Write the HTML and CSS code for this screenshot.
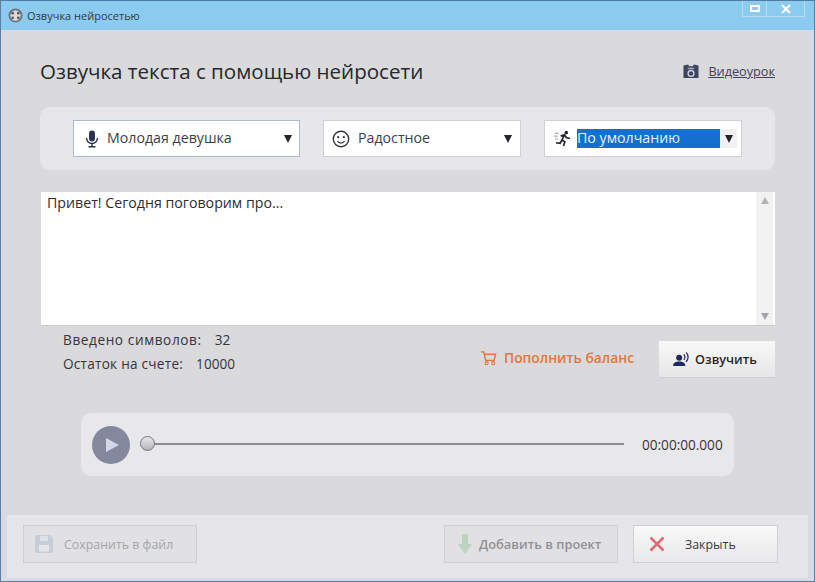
FILE: index.html
```html
<!DOCTYPE html>
<html lang="ru">
<head>
    <meta charset="UTF-8">
    <meta name="viewport" content="width=device-width, initial-scale=1.0">
    <title>Озвучка нейросетью</title>
    <link rel="stylesheet" href="styles.css">
</head>
<body>
    <div class="window">
        <div class="titlebar">
            <div class="title-left">
                <svg class="app-icon" viewBox="0 0 16 16"><circle cx="8" cy="8" r="7.5" fill="#6d7178"/><circle cx="8" cy="8" r="5.5" fill="#d9dadd"/><circle cx="5" cy="5.5" r="1.4" fill="#555"/><circle cx="11" cy="5.5" r="1.4" fill="#555"/><circle cx="5" cy="10.5" r="1.4" fill="#555"/><circle cx="11" cy="10.5" r="1.4" fill="#555"/></svg>
                <span>Озвучка нейросетью</span>
            </div>
            <div class="win-buttons">
                <div class="win-btn"><span class="max-glyph"></span></div>
                <div class="win-btn win-close">
                    <svg viewBox="0 0 10 10" width="10" height="10"><path d="M1 1l8 8M9 1l-8 8" stroke="#fff" stroke-width="2.2"/></svg>
                </div>
            </div>
        </div>

        <div class="main">
            <div class="head-row">
                <h1>Озвучка текста с помощью нейросети</h1>
                <a class="video-link" href="#">
                    <svg viewBox="0 0 16 16" width="16" height="15"><path d="M0 1.500l5-1 1 2h4l1-2 5 1V15H0z" fill="#3c4263"/><circle cx="8" cy="10" r="3.800" fill="#dadadd"/><circle cx="8" cy="10" r="2.400" fill="#3c4263"/><rect x="4.500" y="4" width="7" height="1.500" fill="#a8abba"/></svg>
                    <span>Видеоурок</span>
                </a>
            </div>

            <div class="options-panel">
                <div class="select select-voice">
                    <svg class="sel-icon" viewBox="0 0 16 18" width="16" height="18"><rect x="5" y="0.5" width="6" height="11" rx="3" fill="#2b3154"/><path d="M2.5 8a5.5 5.5 0 0 0 11 0M8 13.5V16M4.5 16.8h7" fill="none" stroke="#2b3154" stroke-width="1.4"/></svg>
                    <span class="sel-text">Молодая девушка</span>
                    <span class="arrow"></span>
                </div>
                <div class="select select-mood">
                    <svg class="sel-icon" viewBox="0 0 18 18" width="18" height="18"><circle cx="9" cy="9" r="7.7" fill="none" stroke="#33363d" stroke-width="1.4"/><circle cx="6.2" cy="7.2" r="1.1" fill="#33363d"/><circle cx="11.8" cy="7.2" r="1.1" fill="#33363d"/><path d="M5.5 11a4 4 0 0 0 7 0" fill="none" stroke="#33363d" stroke-width="1.3"/></svg>
                    <span class="sel-text">Радостное</span>
                    <span class="arrow"></span>
                </div>
                <div class="select select-speed">
                    <svg class="sel-icon" viewBox="0 0 18 18" width="17" height="17"><circle cx="13" cy="2.800" r="1.900" fill="#23262e"/><path d="M7 6.500l4-1.500 2 3 4 1M11 5l-2.500 5.500 3 2-1.500 4.500M8.500 10.500l-2 3.500-4.500-.5" fill="none" stroke="#23262e" stroke-width="1.800"/><path d="M1 3.500h4M0 6.500h4M1 9.500h3" stroke="#8f9198" stroke-width="1"/></svg>
                    <span class="sel-selected">По умолчанию</span>
                    <span class="arrow-box"><span class="arrow"></span></span>
                </div>
            </div>

            <div class="text-box">
                <div class="text-content">Привет! Сегодня поговорим про...</div>
                <div class="scrollbar">
                    <span class="scroll-up"></span>
                    <span class="scroll-down"></span>
                </div>
            </div>

            <div class="action-row">
                <div class="stats">
                    <div class="stat"><span class="stat-label stat-first">Введено символов:</span><span>32</span></div>
                    <div class="stat"><span class="stat-label stat-second">Остаток на счете:</span><span>10000</span></div>
                </div>
                <a class="topup" href="#">
                    <svg viewBox="0 0 18 16" width="17" height="16"><path d="M1 1.500h3l2 9h9l1.500-6.500H4.800" fill="none" stroke="#e2763a" stroke-width="1.500"/><circle cx="7" cy="13.500" r="1.600" fill="none" stroke="#e2763a" stroke-width="1.200"/><circle cx="14" cy="13.500" r="1.600" fill="none" stroke="#e2763a" stroke-width="1.200"/></svg>
                    <span>Пополнить баланс</span>
                </a>
                <button class="btn btn-speak">
                    <svg viewBox="0 0 18 16" width="17" height="15"><circle cx="6.500" cy="6" r="3.200" fill="#1f2a5c"/><path d="M0 15c0-4 3-5 6.500-5s6.500 1 6.500 5z" fill="#1f2a5c"/><path d="M11.500 2.500a5 5 0 0 1 0 6M14 .5a8 8 0 0 1 0 10" fill="none" stroke="#1f2a5c" stroke-width="1.300"/></svg>
                    <span>Озвучить</span>
                </button>
            </div>

            <div class="player">
                <div class="play-btn"><span class="play-tri"></span></div>
                <div class="track"><span class="thumb"></span></div>
                <div class="time">00:00:00.000</div>
            </div>
        </div>

        <div class="footer">
            <button class="foot-btn btn-save" disabled>
                <svg viewBox="0 0 18 18" width="18" height="18"><path d="M0 1.500C0 .700.700 0 1.500 0H15l3 3v13.500c0 .800-.700 1.500-1.500 1.500h-15C.700 18 0 17.300 0 16.500z" fill="#c6ced9"/><rect x="5" y="1" width="8" height="5" fill="#dfe1e6"/><rect x="4" y="10" width="10" height="6.500" fill="#e6e7ea"/></svg>
                <span>Сохранить в файл</span>
            </button>
            <div class="foot-right">
                <button class="foot-btn btn-add" disabled>
                    <svg viewBox="0 0 14 20" width="14" height="20"><path d="M4 0h6v10h4l-7 10-7-10h4z" fill="#bcd3bf"/></svg>
                    <span>Добавить в проект</span>
                </button>
                <button class="foot-btn btn-close">
                    <svg viewBox="0 0 16 16" width="16" height="16"><path d="M1.500 1.500l13 13M14.500 1.500l-13 13" stroke="#de6c72" stroke-width="2.600"/></svg>
                    <span>Закрыть</span>
                </button>
            </div>
        </div>
    </div>
</body>
</html>
```

FILE: styles.css
```css
* { box-sizing: border-box; }
html, body { margin: 0; height: 100%; overflow: hidden; }
body { font-family: "Open Sans", "Noto Sans", sans-serif; font-size: 14px; color: #33353b; background-color: #8fc9ee; }
a { text-decoration: none; }

.window { width: 815px; height: 582px; display: flex; flex-direction: column; background-color: #d6dae6; border: 1px solid #5f7f9c; border-top-color: #4e7d9f; }

/* Titlebar */
.titlebar { height: 29px; flex-shrink: 0; background-color: #8ccbf0; display: flex; justify-content: space-between; align-items: flex-start; padding: 0 9px 0 7px; }
.title-left { display: flex; align-items: center; gap: 4px; height: 29px; font-size: 11px; color: #2f3a44; }
.app-icon { width: 15px; height: 15px; }
.win-buttons { display: flex; border: 1px solid #b6dcf3; border-top: none; height: 16px; }
.win-btn { width: 23px; height: 15px; display: flex; align-items: center; justify-content: center; }
.win-close { width: 38px; border-left: 1px solid #b6dcf3; }
.max-glyph { width: 10px; height: 7px; border: 2px solid #fff; }

/* Main area */
.main { flex: 1; margin: 0 6px; background-color: #dad9db; padding: 26px 33px 0 33px; }
.head-row { display: flex; justify-content: space-between; align-items: center; height: 30px; }
h1 { margin: 0; font-size: 20.55px; font-weight: 400; color: #26282d; }
.video-link { display: flex; align-items: center; gap: 9px; color: #3f4160; font-size: 12.7px; text-decoration: underline; }

.options-panel { margin-top: 21px; height: 63px; background-color: #e7e7e9; border-radius: 10px; display: flex; align-items: center; padding: 0 33px; }
.select { height: 37px; background-color: #fff; border: 1px solid #d0d1d6; display: flex; align-items: center; font-size: 14.2px; color: #3c3f47; }
.select-voice { width: 227px; border: 1px solid #a9bacb; padding-left: 10px; }
.select-mood { width: 198px; margin-left: 23px; padding-left: 8px; }
.select-speed { width: 198px; margin-left: 23px; padding-left: 9px; }
.sel-icon { flex-shrink: 0; }
.sel-text { margin-left: 7px; flex: 1; padding-bottom: 3px; }
.select-mood .sel-text { margin-left: 8px; }
.select-voice .arrow { margin-right: 7px; }
.select-mood .arrow { margin-right: 8px; }
.arrow { width: 0; height: 0; border-left: 4px solid transparent; border-right: 4px solid transparent; border-top: 8px solid #23252b; }
.sel-selected { margin-left: 6px; width: 143px; height: 19px; line-height: 18px; background-color: #1470cf; color: #e8f1fb; }
.arrow-box { width: 17px; height: 19px; background-color: #f1f1f2; display: flex; align-items: center; justify-content: center; }

.text-box { margin-top: 22px; margin-left: 1px; height: 134px; background-color: #fff; display: flex; border-bottom: 1px solid #c9cace; }
.text-content { flex: 1; padding: 1px 6px; font-size: 14.2px; color: #2c2e33; }
.scrollbar { width: 17px; background-color: #f2f2f3; margin-right: 2px; display: flex; flex-direction: column; justify-content: space-between; align-items: center; padding: 5px 0; }
.scroll-up { width: 0; height: 0; border-left: 4px solid transparent; border-right: 4px solid transparent; border-bottom: 7px solid #b3b4b8; }
.scroll-down { width: 0; height: 0; border-left: 4px solid transparent; border-right: 4px solid transparent; border-top: 7px solid #a4a5a9; }

.action-row { display: flex; align-items: flex-start; margin-top: 3px; padding-left: 23px; }
.stats { flex: 1; font-size: 13.6px; color: #33353b; }
.stat { height: 24px; line-height: 22px; display: flex; }
.stat-first { letter-spacing: 0.6px; margin-right: 13px; }
.stat-second { letter-spacing: 0.25px; margin-right: 13px; }
.topup { display: flex; align-items: center; gap: 7px; height: 37px; margin-top: 10px; margin-right: 25px; color: #e2763a; font-size: 13.8px; font-weight: 600; }
.btn { height: 37px; width: 116px; margin-top: 12px; border: none; background: linear-gradient(#f8f8f9, #e6e6e8); font-family: inherit; display: flex; align-items: center; justify-content: center; gap: 5px; padding: 0 4px 0 0; font-size: 12.7px; font-weight: 600; color: #26282d; border-bottom: 1px solid #cfcfd2; }

.player { width: 653px; height: 63px; margin: 35px 0 0 41px; background-color: #e8e7e9; border-radius: 10px; display: flex; align-items: center; padding: 0 11px; }
.play-btn { width: 38px; height: 38px; border-radius: 50%; background-color: #84889d; display: flex; align-items: center; justify-content: center; }
.play-tri { width: 0; height: 0; margin-left: 3px; border-top: 7.500px solid transparent; border-bottom: 7.500px solid transparent; border-left: 13px solid #d2d6e6; }
.track { width: 477px; height: 2px; margin-left: 17px; margin-bottom: 2px; background-color: #8d8d90; position: relative; }
.thumb { position: absolute; left: -7px; top: -7px; width: 15px; height: 15px; border-radius: 50%; background: linear-gradient(#e8e8ea, #b5b5b8); border: 1px solid #77777a; }
.time { margin-left: 18px; font-size: 13.600px; color: #33353b; }

/* Footer */
.footer { height: 63px; margin: 0 6px 3px; background-color: #e6e6e8; display: flex; justify-content: space-between; padding: 10px 30px 0 16px; flex-shrink: 0; }
.foot-right { display: flex; gap: 15px; }
.foot-btn { height: 38px; font-family: inherit; font-size: 12.400px; display: flex; align-items: center; border: 1px solid #cfd0d3; background-color: #e1e1e3; padding: 0; }
.btn-save { width: 174px; padding-left: 11px; gap: 11px; color: #a4a6ab; }
.btn-add { width: 174px; padding-left: 13px; gap: 7px; color: #8f9196; font-weight: 600; font-size: 12.8px; }
.btn-close { width: 145px; padding-left: 15px; gap: 20px; color: #3a3c42; background: linear-gradient(#f9f9fa, #e8e8ea); }
```
